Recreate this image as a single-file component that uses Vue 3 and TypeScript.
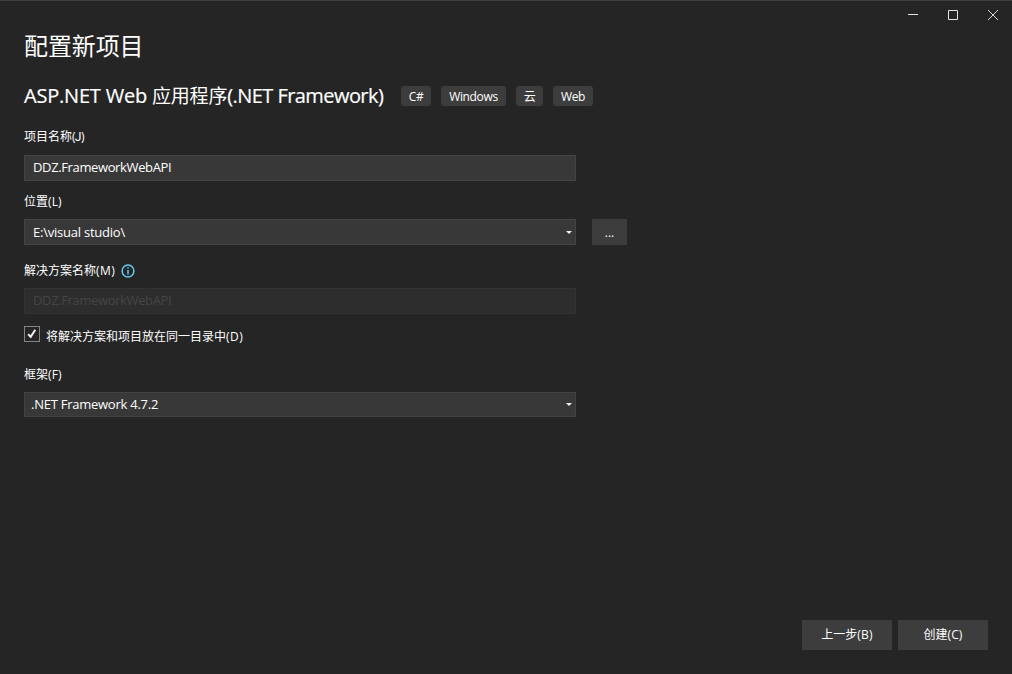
<script setup lang="ts">
import { ref } from 'vue'

const tags = ref<string[]>(['C#', 'Windows', '云', 'Web'])
const projectName = ref('DDZ.FrameworkWebAPI')
const location = ref('E:\\visual studio\\')
const framework = ref('.NET Framework 4.7.2')
const sameDirectory = ref(true)
</script>

<template>
  <main class="dialog">
    <header class="titlebar">
      <svg class="control" viewBox="0 0 40 29"><path d="M8 13.5h10" /></svg>
      <svg class="control" viewBox="0 0 40 29"><path d="M8.5 9.5h9v9h-9z" /></svg>
      <svg class="control close" viewBox="0 0 32 29"><path d="M8 9l10 10M18 9l-10 10" /></svg>
    </header>
    <h1>配置新项目</h1>
    <div class="template-row">
      <h2><span class="title-latin">ASP.NET Web </span><span class="title-cjk">应用程序</span><span class="title-latin tail">(.NET Framework)</span></h2>
      <ul class="tags">
        <li v-for="tag in tags" :key="tag">{{ tag }}</li>
      </ul>
    </div>

    <label class="label name-label">项目名称<span class="key">(<span class="key-j">J</span>)</span></label>
    <div class="field"><span class="name-text">{{ projectName }}</span></div>

    <label class="label location-label">位置<span class="key">(L)</span></label>
    <div class="location-row">
      <div class="field select">
        <span class="location-text">{{ location }}</span>
        <svg class="arrow" viewBox="0 0 6 3"><path d="M0 0h6L3 3z" /></svg>
      </div>
      <button class="browse">...</button>
    </div>

    <label class="label solution-label">
      <span>解决方案名称<span class="key wide">(M)</span></span>
      <svg class="info" viewBox="0 0 14 14"><circle cx="7" cy="7" r="5.9" /><path d="M7 6v4.5M7 3.3v1.5" /></svg>
    </label>
    <div class="field disabled"><span class="name-text">{{ projectName }}</span></div>

    <div class="check-row">
      <span class="checkbox">
        <svg v-if="sameDirectory" viewBox="0 0 14 14"><path d="M3.2 7.2l2.5 2.6 4.6-7" /></svg>
      </span>
      <span class="check-text">将解决方案和项目放在同一目录中<span class="key wide">(D)</span></span>
    </div>

    <label class="label framework-label">框架<span class="key">(F)</span></label>
    <div class="field select framework">
      <span class="framework-text">{{ framework }}</span>
      <svg class="arrow" viewBox="0 0 6 3"><path d="M0 0h6L3 3z" /></svg>
    </div>

    <footer>
      <button>上一步<span class="key">(B)</span></button>
      <button>创建<span class="key">(C)</span></button>
    </footer>
  </main>
</template>

<style>
body {
  background: #252525;
}
</style>

<style scoped>
.dialog {
  box-sizing: border-box;
  display: flex;
  flex-direction: column;
  width: 1012px;
  height: 674px;
  padding: 0 24px 24px;
  border-top: 1px solid #3f3f40;
  background: #252525;
  color: #fff;
  font-family: "Open Sans", "Noto Sans CJK SC", sans-serif;
  font-size: 12px;
}
.titlebar {
  display: flex;
  justify-content: flex-end;
  height: 29px;
  margin-right: -24px;
}
.control {
  width: 40px;
  height: 29px;
  fill: none;
  stroke: #e4e4e4;
  stroke-width: 1;
}
.close {
  width: 32px;
  stroke: #d8d8d8;
}
h1 {
  height: 32px;
  margin: 0;
  font-size: 24px;
  font-weight: 400;
  letter-spacing: -0.1px;
  line-height: 32px;
}
.template-row {
  display: flex;
  align-items: center;
  height: 28px;
  margin-top: 20px;
}
h2 {
  width: 377px;
  margin: 0;
  font-size: 19px;
  font-weight: 400;
  line-height: 28px;
  white-space: pre;
}
.title-latin {
  font-size: 20px;
  letter-spacing: -0.2px;
  -webkit-text-stroke: 0.2px #fff;
}
.title-latin.tail {
  letter-spacing: -0.56px;
}
.title-cjk {
  letter-spacing: -0.2px;
}
.tags {
  display: flex;
  gap: 10px;
  margin: 0;
  padding: 0;
  list-style: none;
}
.tags li {
  width: 30px;
  height: 20px;
  border-radius: 3px;
  background: #3d3d3d;
  letter-spacing: -0.35px;
  line-height: 21px;
  text-align: center;
}
.tags li:nth-child(2) {
  width: 65px;
}
.tags li:nth-child(3) {
  width: 27px;
}
.tags li:nth-child(4) {
  width: 40px;
}
.label {
  display: flex;
  align-items: center;
  height: 18px;
}
.key {
  letter-spacing: 0.15px;
}
.key.wide {
  letter-spacing: 0.5px;
}
.key-j {
  margin: 0 -0.4px 0 -1px;
  font-family: Roboto, sans-serif;
}
.name-label {
  margin-top: 17px;
}
.field {
  box-sizing: border-box;
  display: flex;
  flex: none;
  align-items: center;
  width: 552px;
  height: 26px;
  padding: 0 3px 0 8px;
  border: 1px solid #434343;
  background: #383838;
  font-size: 13px;
  line-height: 24px;
}
.name-label + .field {
  margin-top: 10px;
}
.name-text {
  padding-bottom: 2px;
  letter-spacing: -0.37px;
  line-height: 22px;
}
.location-text {
  letter-spacing: -0.23px;
}
.location-label {
  margin-top: 11px;
}
.location-row {
  display: flex;
  gap: 16px;
  margin-top: 9px;
}
.select {
  justify-content: space-between;
}
.arrow {
  width: 6px;
  height: 3px;
  fill: #f0f0f0;
}
button {
  padding: 0;
  border: 0;
  background: #3d3d3d;
  color: #fff;
  font: inherit;
}
.browse {
  width: 35px;
  height: 26px;
}
.solution-label {
  gap: 6px;
  margin-top: 16px;
}
.info {
  width: 14px;
  height: 14px;
  margin-top: 2px;
  fill: none;
  stroke: #61c8ee;
  stroke-width: 1.5;
}
.disabled {
  margin-top: 9px;
  border-color: #323232;
  background: #2d2d2d;
  color: #454545;
}
.check-row {
  display: flex;
  gap: 6px;
  height: 20px;
  margin-top: 12px;
}
.checkbox {
  box-sizing: border-box;
  width: 16px;
  height: 16px;
  border: 1px solid #858585;
}
.checkbox svg {
  display: block;
  width: 14px;
  height: 14px;
  fill: none;
  stroke: #f0f0f0;
  stroke-width: 2;
}
.check-text {
  line-height: 22px;
}
.framework-label {
  margin-top: 19px;
}
.framework {
  height: 25px;
  margin-top: 9px;
  padding-left: 6px;
}
.framework-text {
  padding-bottom: 1px;
  letter-spacing: -0.25px;
  line-height: 22px;
}
footer {
  display: flex;
  justify-content: flex-end;
  gap: 6px;
  margin-top: auto;
}
footer button {
  width: 90px;
  height: 30px;
  padding: 0 0 2px 0;
}
</style>
